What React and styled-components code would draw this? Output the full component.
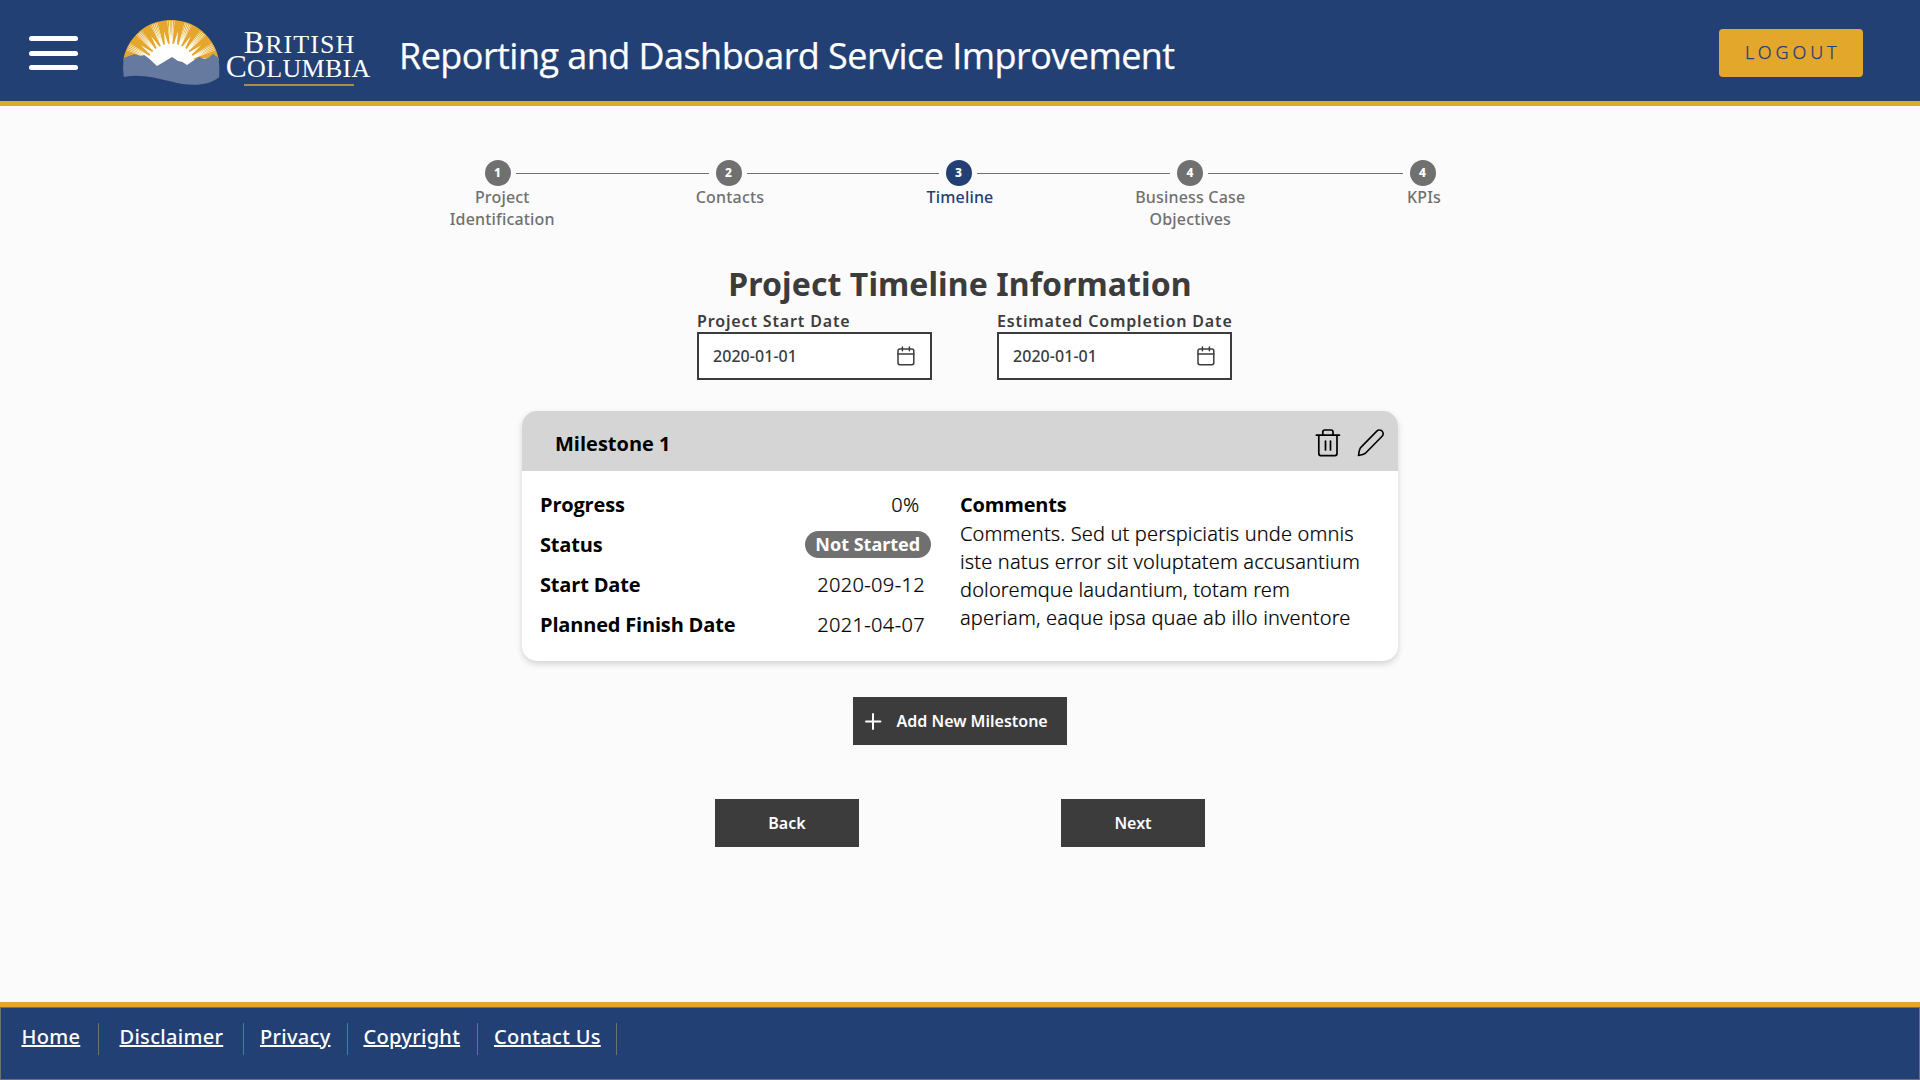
import React from 'react';
import styled, { createGlobalStyle } from 'styled-components';

const navy = '#234075';
const gold = '#e3a82b';
const dark = '#3c3c3c';
const grey = '#707070';
const noto = '"Noto Sans", "Open Sans", sans-serif';
const open = '"Open Sans", "Noto Sans", sans-serif';

const GlobalStyle = createGlobalStyle`
  * { box-sizing: border-box; }
  body { margin: 0; background: #fbfbfb; font-family: ${noto}; }
`;

const Page = styled.div`
  display: flex;
  flex-direction: column;
  width: 1920px;
  height: 1080px;
  overflow: hidden;
  background: #fbfbfb;
`;

const Header = styled.header`
  display: flex;
  align-items: center;
  height: 106px;
  padding: 0 57px 0 29px;
  background: ${navy};
  border-bottom: 5px solid ${gold};
`;

const MenuButton = styled.button`
  display: flex;
  flex-direction: column;
  gap: 9.3px;
  width: 49px;
  margin: 5.6px 42px 0 0;
  padding: 0;
  border: 0;
  background: none;
`;

const MenuBar = styled.span`
  height: 5.2px;
  border-radius: 3px;
  background: #fff;
`;

const LogoSvg = styled.svg`
  display: block;
  flex: none;
  width: 260px;
  height: 101px;
`;

const AppTitle = styled.h1`
  margin: 0 auto 0 19px;
  padding-top: 11px;
  font: 400 36px/50px ${open};
  letter-spacing: -0.55px;
  white-space: nowrap;
  color: #fff;
  -webkit-text-stroke: 0.25px #fff;
`;

const LogoutButton = styled.button`
  width: 144px;
  height: 48px;
  margin-top: 5px;
  padding: 0 0 2px 26px;
  border: 0;
  border-radius: 4px;
  background: ${gold};
  color: ${navy};
  font: 300 18px/24px ${noto};
  letter-spacing: 3.9px;
  text-align: left;
  -webkit-text-stroke: 0.25px ${navy};
`;

const Main = styled.main`
  display: flex;
  flex-direction: column;
  align-items: center;
  padding-top: 54px;
`;

const Stepper = styled.div`
  display: flex;
  height: 70px;
`;

const Step = styled.div`
  display: flex;
  flex-direction: column;
  align-items: center;
  width: 26px;
  color: ${(p) => (p.$active ? navy : grey)};
`;

const StepDot = styled.span`
  flex: none;
  width: 26px;
  height: 26px;
  border-radius: 50%;
  background: currentColor;
`;

const StepNumber = styled.span`
  display: block;
  color: #fff;
  font: 800 12px/26px ${noto};
  text-align: center;
`;

const StepLabel = styled.span`
  padding-left: ${(p) => p.$shift || 0}px;
  font: 500 16px/22px ${noto};
  letter-spacing: 0.18px;
  text-align: center;
  white-space: pre;
`;

const StepLine = styled.span`
  width: ${(p) => p.$width}px;
  height: 1px;
  margin: 13px 7px 0 5px;
  background: ${grey};
`;

const Heading = styled.h2`
  margin: 32px 0 4px;
  color: ${dark};
  font: 700 32px/44px ${noto};
  letter-spacing: 0.08px;
`;

const Fields = styled.div`
  display: flex;
  gap: 65px;
  margin-left: 9px;
`;

const Field = styled.label`
  display: flex;
  flex-direction: column;
  width: 235px;
  color: ${dark};
`;

const FieldLabel = styled.span`
  font: 600 16px/22px ${noto};
  letter-spacing: 0.86px;
  white-space: nowrap;
`;

const DateBox = styled.span`
  display: flex;
  align-items: center;
  justify-content: space-between;
  height: 48px;
  padding: 0 15px 0 14px;
  border: 2px solid ${dark};
  background: #fff;
  font: 500 16px/22px ${noto};
  letter-spacing: 0.05px;
`;

const Card = styled.section`
  width: 876px;
  height: 250px;
  margin-top: 31px;
  border-radius: 15px;
  overflow: hidden;
  background: #fff;
  box-shadow: 0 3px 6px rgba(0, 0, 0, 0.16);
  color: #000;
`;

const CardHeader = styled.div`
  display: flex;
  align-items: center;
  height: 60px;
  padding: 0 12px 0 33px;
  background: #d5d5d5;
`;

const CardTitle = styled.h3`
  margin: 0 auto 0 0;
  padding-top: 6px;
  font: 700 20px/28px ${open};
`;

const IconButton = styled.button`
  display: flex;
  margin: 4px 0 0 ${(p) => p.$gap || 0}px;
  padding: 0;
  border: 0;
  background: none;
`;

const CardBody = styled.div`
  display: grid;
  grid-template-columns: 391px 410px;
  column-gap: 29px;
  padding: 14px 0 0 18px;
`;

const Row = styled.div`
  display: flex;
  align-items: center;
  justify-content: space-between;
  height: 40px;
`;

const RowLabel = styled.span`
  font: 700 20px/40px ${open};
  letter-spacing: -0.18px;
`;

const RowValue = styled.span`
  margin-right: ${(p) => p.$inset}px;
  font: 300 20px/40px ${noto};
  letter-spacing: ${(p) => p.$spacing}px;
  -webkit-text-stroke: 0.2px #000;
`;

const StatusPill = styled.span`
  width: 126.5px;
  height: 27px;
  margin-bottom: 1px;
  border-radius: 14px;
  background: ${grey};
  color: #fff;
  font: 700 18px/27px ${noto};
  text-align: center;
`;

const Comments = styled.div`
  padding-top: 5px;
`;

const CommentsTitle = styled.div`
  font: 700 20px/30px ${open};
  letter-spacing: -0.18px;
`;

const CommentsText = styled.p`
  margin: 0;
  font: 300 20px/28px ${noto};
  letter-spacing: 0.15px;
  white-space: pre-line;
  -webkit-text-stroke: 0.2px #000;
`;

const DarkButton = styled.button`
  display: flex;
  align-items: center;
  justify-content: center;
  width: ${(p) => p.$width}px;
  height: 48px;
  margin-top: ${(p) => p.$top || 0}px;
  padding: 0;
  gap: 14.5px;
  border: 0;
  background: ${dark};
  color: #fff;
  font: 600 16px/22px ${noto};
`;

const AddButton = styled(DarkButton)`
  justify-content: flex-start;
  padding-left: 12px;
`;

const NavButtons = styled.div`
  display: flex;
  gap: 202px;
  margin-top: 54px;
`;

const Footer = styled.footer`
  height: 78px;
  margin-top: auto;
  border-top: 5px solid ${gold};
  background: ${navy};
`;

const FooterInner = styled.nav`
  display: flex;
  align-items: flex-start;
  height: 73px;
  padding: 15px 0 0 20.5px;
  border: 1px solid ${grey};
`;

const FooterLink = styled.a`
  width: ${(p) => p.$width}px;
  color: #fff;
  font: 500 20px/27px ${noto};
  letter-spacing: 0.3px;
  text-decoration: underline;
  white-space: nowrap;
`;

const Divider = styled.span`
  width: 1px;
  height: 32px;
  margin: 0 ${(p) => p.$right}px 0 ${(p) => p.$left}px;
  background: ${grey};
`;

const CX = 51;
const CY = 68.5;
const pt = (deg, r) => {
  const a = (deg * Math.PI) / 180;
  return `${(CX + r * Math.cos(a)).toFixed(2)},${(CY - r * Math.sin(a)).toFixed(2)}`;
};
const bundles = [6, 27, 48, 69, 90, 111, 132, 153, 174];
const notches = [16.5, 37.5, 58.5, 79.5, 100.5, 121.5, 142.5, 163.5];

function Logo() {
  return (
    <LogoSvg viewBox="0 0 260 101" role="img" aria-label="British Columbia">
      <defs>
        <clipPath id="sky">
          <path d="M3.5 60 V0 H99.5 V60 L67 68 H37 Z" />
        </clipPath>
      </defs>
      <g clipPath="url(#sky)">
        <circle cx={CX} cy={CY} r="48.6" fill={gold} />
        <circle cx={CX} cy={CY} r="25" fill="#fff" />
        {notches.map((a) => (
          <polygon key={a} points={`${pt(a - 4, 24)} ${pt(a, 38)} ${pt(a + 4, 24)}`} fill="#fff" />
        ))}
        {bundles.map((a) => (
          <g key={a}>
            <polygon points={`${pt(a - 3, 24)} ${pt(a - 4.4, 47.8)} ${pt(a + 4.4, 47.8)} ${pt(a + 3, 24)}`} fill="#fff" />
            {[-3.3, -1.1, 1.1, 3.3].map((d) => (
              <polygon key={d} points={`${pt(a + d * 0.8, 29)} ${pt(a + d - 0.75, 48.4)} ${pt(a + d + 0.75, 48.4)}`} fill={gold} />
            ))}
          </g>
        ))}
      </g>
      <path
        fill="#667a9f"
        d="M3.6 58 L14.5 54 L20 56 L24.3 55 L29 58.5 L37 66 L52 57 L58 61 L62.5 62 L67 65 L79 56.7 L84 59 L88 58.3 L93 54 L98.5 57.8 Q99.8 67 99.2 77 C88 86.5 70 86.5 51 81.5 C35 77.5 19 73.5 3.8 77 Q2.4 68 3.6 58 Z"
      />
      <g fill="#fff" fontFamily='"Liberation Serif", serif'>
        <text x="123.8" y="53" fontSize="30.5" textLength="110.5" lengthAdjust="spacing">
          B<tspan fontSize="26">RITISH</tspan>
        </text>
        <text x="105.8" y="77.2" fontSize="31.5" textLength="144.5" lengthAdjust="spacing">
          C<tspan fontSize="26">OLUMBIA</tspan>
        </text>
      </g>
      <rect x="124" y="84" width="110" height="2" fill="#b08c41" />
    </LogoSvg>
  );
}

const CalendarIcon = () => (
  <svg width="18" height="20" viewBox="0 0 18 20" fill="none" stroke={dark} strokeWidth="1.5" strokeLinecap="round" strokeLinejoin="round">
    <rect x="1" y="2.9" width="15.8" height="15.8" rx="1.9" />
    <path d="M5.4 1v3.8M12.4 1v3.8M1 8h15.8" />
  </svg>
);

const TrashIcon = () => (
  <svg width="26" height="30" viewBox="0 0 26 30" fill="none" stroke="#000" strokeWidth="1.7" strokeLinecap="round" strokeLinejoin="round">
    <path d="M1.4 7.2H24.4M3.8 7.2V25.6a2 2 0 0 0 2 2H20a2 2 0 0 0 2-2V7.2M7.8 7.2V4a2 2 0 0 1 2-2h6.2a2 2 0 0 1 2 2v3.2M10.5 13v9M15.5 13v9" />
  </svg>
);

const PencilIcon = () => (
  <svg width="30" height="30" viewBox="0 0 30 30" fill="none" stroke="#000" strokeWidth="1.6" strokeLinejoin="round">
    <path d="M20.8 3.1a3.7 3.7 0 0 1 5.3 5.2L9.4 25.2C7.6 26.9 5 26.8 2.5 27.5 3 25 2.9 22.2 4.4 19.9Z" />
  </svg>
);

const PlusIcon = () => (
  <svg width="17" height="17" viewBox="0 0 17 17" stroke="#fff" strokeWidth="2" strokeLinecap="round">
    <path d="M8 1V16M1 8.4H15.4" />
  </svg>
);

const steps = [
  { n: 1, label: 'Project\nIdentification', shift: 9.5, line: 193 },
  { n: 2, label: 'Contacts', shift: 3, line: 192 },
  { n: 3, label: 'Timeline', shift: 3, line: 193.5, active: true },
  { n: 4, label: 'Business Case\nObjectives', shift: 0.5, line: 194.5 },
  { n: 4, label: 'KPIs', shift: 3 },
];

const links = [
  { text: 'Home', width: 59, left: 17, right: 21 },
  { text: 'Disclaimer', width: 104, left: 19.5, right: 16 },
  { text: 'Privacy', width: 70.5, left: 16, right: 16 },
  { text: 'Copyright', width: 98, left: 15, right: 16.5 },
  { text: 'Contact Us', width: 107, left: 15, right: 0 },
];

export default function App() {
  return (
    <Page>
      <GlobalStyle />
      <Header>
        <MenuButton aria-label="Menu">
          <MenuBar />
          <MenuBar />
          <MenuBar />
        </MenuButton>
        <Logo />
        <AppTitle>Reporting and Dashboard Service Improvement</AppTitle>
        <LogoutButton>LOGOUT</LogoutButton>
      </Header>
      <Main>
        <Stepper>
          {steps.map((s) => (
            <React.Fragment key={s.label}>
              <Step $active={s.active}>
                <StepDot>
                  <StepNumber>{s.n}</StepNumber>
                </StepDot>
                <StepLabel $shift={s.shift}>{s.label}</StepLabel>
              </Step>
              {s.line && <StepLine $width={s.line} />}
            </React.Fragment>
          ))}
        </Stepper>
        <Heading>Project Timeline Information</Heading>
        <Fields>
          {['Project Start Date', 'Estimated Completion Date'].map((label) => (
            <Field key={label}>
              <FieldLabel>{label}</FieldLabel>
              <DateBox>
                2020-01-01
                <CalendarIcon />
              </DateBox>
            </Field>
          ))}
        </Fields>
        <Card>
          <CardHeader>
            <CardTitle>Milestone 1</CardTitle>
            <IconButton aria-label="Delete milestone">
              <TrashIcon />
            </IconButton>
            <IconButton $gap={15} aria-label="Edit milestone">
              <PencilIcon />
            </IconButton>
          </CardHeader>
          <CardBody>
            <div>
              <Row>
                <RowLabel>Progress</RowLabel>
                <RowValue $inset={11.5} $spacing={0.3}>0%</RowValue>
              </Row>
              <Row>
                <RowLabel>Status</RowLabel>
                <StatusPill>Not Started</StatusPill>
              </Row>
              <Row>
                <RowLabel>Start Date</RowLabel>
                <RowValue $inset={6} $spacing={0.36}>2020-09-12</RowValue>
              </Row>
              <Row>
                <RowLabel>Planned Finish Date</RowLabel>
                <RowValue $inset={6} $spacing={0.36}>2021-04-07</RowValue>
              </Row>
            </div>
            <Comments>
              <CommentsTitle>Comments</CommentsTitle>
              <CommentsText>
                {'Comments. Sed ut perspiciatis unde omnis\niste natus error sit voluptatem accusantium\ndoloremque laudantium, totam rem\naperiam, eaque ipsa quae ab illo inventore'}
              </CommentsText>
            </Comments>
          </CardBody>
        </Card>
        <AddButton $width={214} $top={36}>
          <PlusIcon />
          Add New Milestone
        </AddButton>
        <NavButtons>
          <DarkButton $width={144}>Back</DarkButton>
          <DarkButton $width={144}>Next</DarkButton>
        </NavButtons>
      </Main>
      <Footer>
        <FooterInner>
          {links.map((l) => (
            <React.Fragment key={l.text}>
              <FooterLink $width={l.width}>{l.text}</FooterLink>
              <Divider $left={l.left} $right={l.right} />
            </React.Fragment>
          ))}
        </FooterInner>
      </Footer>
    </Page>
  );
}
